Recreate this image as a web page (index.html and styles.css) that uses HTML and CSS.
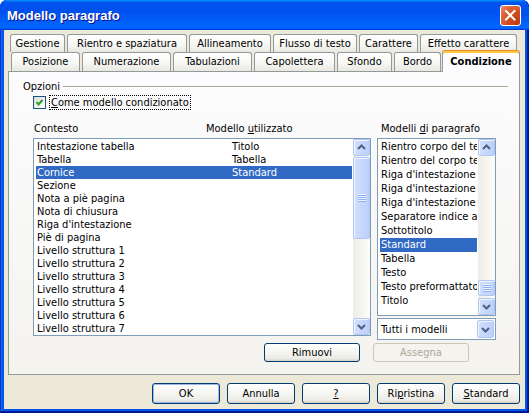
FILE: index.html
```html
<!DOCTYPE html>
<html lang="it">
<head>
<meta charset="utf-8">
<title>Modello paragrafo</title>
<link rel="stylesheet" href="styles.css">
</head>
<body>
<div class="window">
  <div class="titlebar">
    <span class="title">Modello paragrafo</span>
    <span class="close"><svg width="19" height="19" viewBox="0 0 19 19"><path d="M5 5L13.5 13.5M13.5 5L5 13.5" stroke="#fff" stroke-width="2" stroke-linecap="square"/></svg></span>
  </div>
  <div class="client">
    <div class="tabs">
      <div class="tabrow back">
        <div class="tab">Gestione</div>
        <div class="tab">Rientro e spaziatura</div>
        <div class="tab">Allineamento</div>
        <div class="tab">Flusso di testo</div>
        <div class="tab">Carattere</div>
        <div class="tab">Effetto carattere</div>
      </div>
      <div class="tabrow front">
        <div class="tab">Posizione</div>
        <div class="tab">Numerazione</div>
        <div class="tab">Tabulazioni</div>
        <div class="tab">Capolettera</div>
        <div class="tab">Sfondo</div>
        <div class="tab">Bordo</div>
        <div class="tab active">Condizione</div>
      </div>
    </div>
    <div class="panel">
      <div class="grouphead"><span>Opzioni</span><span class="line"></span></div>
      <div class="check">
        <span class="box"><svg width="11" height="11" viewBox="0 0 11 11"><path d="M2.5 5L4.5 7.5L8.5 3" fill="none" stroke="#21A121" stroke-width="2"/></svg></span>
        <span class="focus"><u>C</u>ome modello condizionato</span>
      </div>
      <div class="columns">
        <div class="leftcol">
          <div class="heads"><span class="h1">Contesto</span><span>Modello <u>u</u>tilizzato</span></div>
          <div class="list big">
            <div class="items">
              <div class="row"><span class="c1">Intestazione tabella</span><span>Titolo</span></div>
              <div class="row"><span class="c1">Tabella</span><span>Tabella</span></div>
              <div class="row sel"><span class="c1">Cornice</span><span>Standard</span></div>
              <div class="row"><span class="c1">Sezione</span></div>
              <div class="row"><span class="c1">Nota a piè pagina</span></div>
              <div class="row"><span class="c1">Nota di chiusura</span></div>
              <div class="row"><span class="c1">Riga d'intestazione</span></div>
              <div class="row"><span class="c1">Piè di pagina</span></div>
              <div class="row"><span class="c1">Livello struttura 1</span></div>
              <div class="row"><span class="c1">Livello struttura 2</span></div>
              <div class="row"><span class="c1">Livello struttura 3</span></div>
              <div class="row"><span class="c1">Livello struttura 4</span></div>
              <div class="row"><span class="c1">Livello struttura 5</span></div>
              <div class="row"><span class="c1">Livello struttura 6</span></div>
              <div class="row"><span class="c1">Livello struttura 7</span></div>
            </div>
            <div class="vscroll">
              <span class="sbtn"><svg width="15" height="15" viewBox="0 0 15 15"><path d="M4 9L7.5 5.5L11 9" fill="none" stroke="#4D6185" stroke-width="2"/></svg></span>
              <span class="sbtn thumb thumb-big"><svg width="8" height="8" viewBox="0 0 8 8"><rect y="0" width="8" height="1" fill="#EEF4FE"/><rect y="1" width="8" height="1" fill="#8CB0F8"/><rect y="2" width="8" height="1" fill="#EEF4FE"/><rect y="3" width="8" height="1" fill="#8CB0F8"/><rect y="4" width="8" height="1" fill="#EEF4FE"/><rect y="5" width="8" height="1" fill="#8CB0F8"/><rect y="6" width="8" height="1" fill="#EEF4FE"/><rect y="7" width="8" height="1" fill="#8CB0F8"/></svg></span>
              <span class="track"></span>
              <span class="sbtn"><svg width="15" height="15" viewBox="0 0 15 15"><path d="M4 6L7.5 9.5L11 6" fill="none" stroke="#4D6185" stroke-width="2"/></svg></span>
            </div>
          </div>
        </div>
        <div class="rightcol">
          <div class="heads"><span class="h3">Modelli <u>d</u>i paragrafo</span></div>
          <div class="list small">
            <div class="items">
              <div class="row"><span>Rientro corpo del testo</span></div>
              <div class="row"><span>Rientro del corpo testo</span></div>
              <div class="row"><span>Riga d'intestazione</span></div>
              <div class="row"><span>Riga d'intestazione destra</span></div>
              <div class="row"><span>Riga d'intestazione sinistra</span></div>
              <div class="row"><span>Separatore indice analitico</span></div>
              <div class="row"><span>Sottotitolo</span></div>
              <div class="row sel"><span>Standard</span></div>
              <div class="row"><span>Tabella</span></div>
              <div class="row"><span>Testo</span></div>
              <div class="row"><span>Testo preformattato</span></div>
              <div class="row"><span>Titolo</span></div>
            </div>
            <div class="vscroll">
              <span class="sbtn"><svg width="15" height="15" viewBox="0 0 15 15"><path d="M4 9L7.5 5.5L11 9" fill="none" stroke="#4D6185" stroke-width="2"/></svg></span>
              <span class="sbtn thumb thumb-small"><svg width="8" height="8" viewBox="0 0 8 8"><rect y="0" width="8" height="1" fill="#EEF4FE"/><rect y="1" width="8" height="1" fill="#8CB0F8"/><rect y="2" width="8" height="1" fill="#EEF4FE"/><rect y="3" width="8" height="1" fill="#8CB0F8"/><rect y="4" width="8" height="1" fill="#EEF4FE"/><rect y="5" width="8" height="1" fill="#8CB0F8"/><rect y="6" width="8" height="1" fill="#EEF4FE"/><rect y="7" width="8" height="1" fill="#8CB0F8"/></svg></span>
              <span class="track"></span>
              <span class="sbtn"><svg width="15" height="15" viewBox="0 0 15 15"><path d="M4 6L7.5 9.5L11 6" fill="none" stroke="#4D6185" stroke-width="2"/></svg></span>
            </div>
          </div>
          <div class="combo">
            <span>Tutti i modelli</span>
            <span class="sbtn combobtn"><svg width="15" height="15" viewBox="0 0 15 15"><path d="M4 6L7.5 9.5L11 6" fill="none" stroke="#4D6185" stroke-width="2"/></svg></span>
          </div>
        </div>
      </div>
      <div class="actions">
        <button class="btn wide">Rimuovi</button>
        <button class="btn wide" disabled>Assegna</button>
      </div>
    </div>
    <div class="footer">
      <button class="btn ok">OK</button>
      <button class="btn">Annulla</button>
      <button class="btn"><u>?</u></button>
      <button class="btn">Ri<u>p</u>ristina</button>
      <button class="btn"><u>S</u>tandard</button>
    </div>
  </div>
</div>
</body>
</html>
```
FILE: styles.css
```css
* { box-sizing: border-box; margin: 0; padding: 0; }
html, body { width: 529px; height: 413px; overflow: hidden; background: #ffffff; }
body {
  font-family: "DejaVu Sans Condensed", "Liberation Sans", sans-serif;
  font-size: 11px;
  line-height: 13px;
  color: #000;
}
u { text-decoration: underline; text-underline-offset: 1px; }

.window {
  width: 529px;
  height: 413px;
  display: flex;
  flex-direction: column;
  background: #0055E5;
  border-radius: 7px 7px 0 0;
  overflow: hidden;
  box-shadow: inset -1px -1px #00138C, inset 1px 1px #0831D9, inset -2px -2px #001EA0, inset 2px 2px #166AEE;
}
.titlebar {
  height: 30px;
  flex: none;
  display: flex;
  align-items: center;
  justify-content: space-between;
  padding: 0 8px 0 7px;
  background: linear-gradient(180deg, #0997FF, #0053EE 8%, #0050EE 40%, #0066FF 88%, #0066FF 93%, #005BFF 95%, #003DD7 96%, #003DD7);
  border-radius: 7px 7px 0 0;
}
.title {
  color: #fff;
  font: bold 13px "Liberation Sans", sans-serif;
  text-shadow: 1px 1px #0F1089;
  padding-top: 1px;
}
.close {
  width: 21px;
  height: 21px;
  border: 1px solid #fff;
  border-radius: 3px;
  background: radial-gradient(circle at 85% 85%, #C23C12 0%, #D24D20 45%, #E06A42 75%, #EE9274 100%);
  display: flex;
  align-items: center;
  justify-content: center;
  margin-top: 1px;
}

.client {
  flex: 1;
  margin: 0 4px 4px;
  background: #ECE9D8;
  display: flex;
  flex-direction: column;
}

.tabs { padding-top: 4px; }
.tabrow { display: grid; column-gap: 2px; }
.back {
  height: 18px;
  padding-left: 6px;
  grid-template-columns: 55px 120px 82px 84px 59px 97px;
}
.front {
  height: 19px;
  padding-left: 7px;
  grid-template-columns: 69px 89px 79px 81px 55px 47px 76px;
  position: relative;
  z-index: 2;
}
.tab {
  border: 1px solid #919B9C;
  border-bottom: 0;
  border-radius: 3px 3px 0 0;
  background: linear-gradient(#FFFFFF, #F7F7F4 55%, #E9E7DF);
  text-align: center;
  white-space: nowrap;
  overflow: hidden;
  padding-top: 2px;
}
.back .tab { height: 18px; }
.front .tab { height: 19px; }
.tab.active {
  margin: -2px -1px 0;
  height: 22px;
  background: #FCFCFE;
  border-top: 1px solid #E68B2C;
  box-shadow: inset 0 2px #FFC73C;
  font-weight: bold;
  padding-top: 4px;
}

.panel {
  margin-left: 4px;
  width: 512px;
  height: 304px;
  flex: none;
  border: 1px solid #919B9C;
  background: linear-gradient(#FCFCFE, #F4F3EE);
  padding: 0 23px 0 24px;
}
.grouphead {
  display: flex;
  align-items: center;
  margin: 8px -12px 0 -10px;
  height: 13px;
}
.grouphead .line {
  flex: 1;
  margin: 1px 0 0 3px;
  border-top: 1px solid #ACA899;
  border-bottom: 1px solid #FFFFFF;
}
.check {
  display: flex;
  align-items: center;
  margin-top: 3px;
  height: 13px;
}
.box {
  width: 13px;
  height: 13px;
  border: 1px solid #1C5180;
  background: linear-gradient(135deg, #DCDCD7, #FFFFFF);
  display: flex;
}
.focus {
  margin-left: 3px;
  border: 1px dotted #000;
  padding: 0 1px;
  line-height: 13px;
}

.columns {
  display: flex;
  gap: 6px;
  margin-top: 13px;
  align-items: flex-start;
}
.leftcol { width: 338px; }
.rightcol { width: 119px; }
.heads { display: flex; height: 13px; margin-bottom: 3px; }
.h1 { width: 173px; padding-left: 1px; }
.h3 { padding-left: 4px; }

.list {
  border: 1px solid #7F9DB9;
  background: #fff;
  display: flex;
}
.big { height: 198px; }
.small { height: 178px; }
.items {
  flex: 1;
  min-width: 0;
  padding: 1px 1px 0 2px;
  overflow: hidden;
}
.row {
  display: flex;
  height: 13px;
  white-space: nowrap;
  overflow: hidden;
}
.small .row { height: 14px; line-height: 14px; }
.row span { padding-left: 1px; }
.c1 { width: 195px; flex: none; }
.sel { background: #316AC5; color: #fff; }

.vscroll {
  width: 17px;
  flex: none;
  display: flex;
  flex-direction: column;
  background: linear-gradient(to right, #EEEDE5, #FDFDFA);
}
.sbtn {
  width: 17px;
  height: 17px;
  flex: none;
  border: 1px solid #B1C5F3;
  border-radius: 2px;
  background: linear-gradient(to right, #D2DFFD, #BCD0FA);
  box-shadow: inset 1px 1px #F0F5FF;
  display: flex;
  align-items: center;
  justify-content: center;
}
.thumb-big { margin-top: 1px; height: 82px; }
.thumb-small { margin-top: 124px; height: 16px; }
.track { flex: 1; }

.combo {
  margin-top: 2px;
  height: 22px;
  border: 1px solid #7F9DB9;
  background: #fff;
  display: flex;
  align-items: center;
  justify-content: space-between;
  padding: 0 1px 0 3px;
}
.combobtn { height: 18px; }

.btn {
  font: inherit;
  color: #000;
  border: 1px solid #003C74;
  border-radius: 3px;
  background: linear-gradient(#FFFFFF, #F6F6F3 45%, #ECEBE6 85%, #D6D0C5);
  display: flex;
  align-items: center;
  justify-content: center;
  padding: 0;
}
.btn:disabled {
  border-color: #C9C7BA;
  color: #ACA899;
  background: #F4F3EE;
}
.actions {
  display: flex;
  gap: 13px;
  margin-top: 3px;
  padding-left: 231px;
}
.wide { width: 96px; height: 19px; }

.footer {
  display: flex;
  justify-content: flex-end;
  gap: 7px;
  margin-top: 8px;
  padding-right: 5px;
}
.footer .btn { width: 68px; height: 21px; }
.ok { box-shadow: inset 0 0 0 1px #9DB9EB; }
```
